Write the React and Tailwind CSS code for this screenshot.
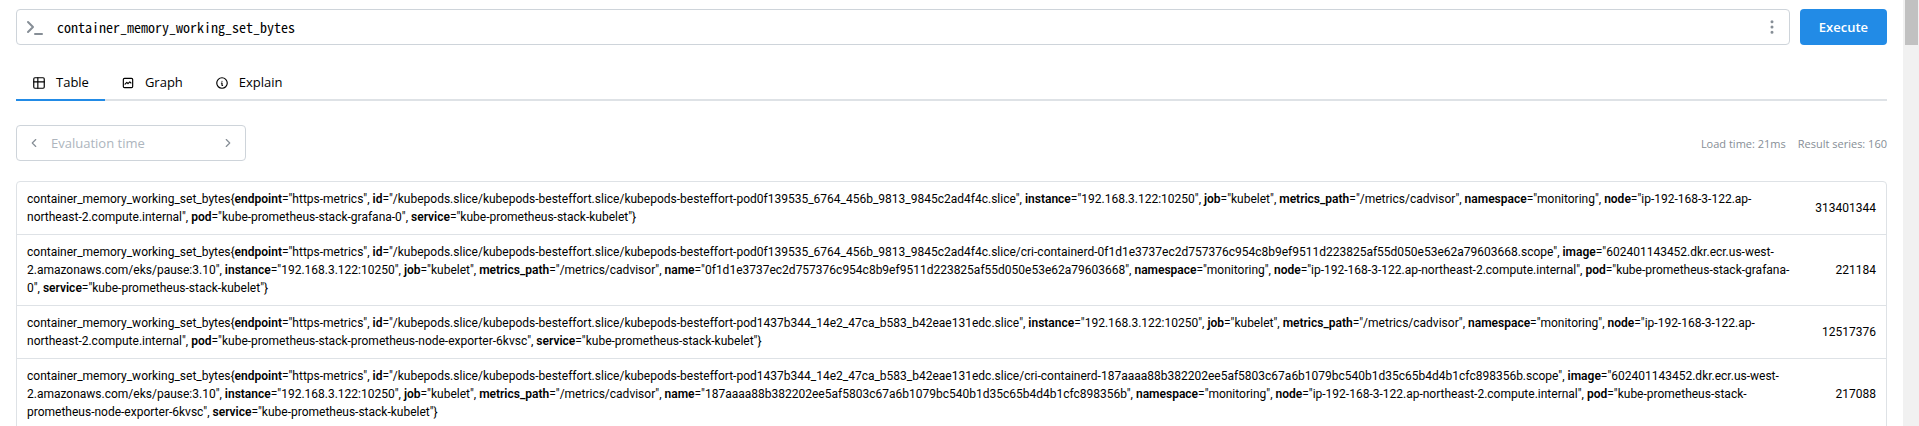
import React, { useState } from 'react';
import { TbTable, TbGraph, TbInfoCircle, TbChevronLeft, TbChevronRight, TbDotsVertical, TbTerminal } from 'react-icons/tb';

const METRIC = 'container_memory_working_set_bytes';

const BASE = '/kubepods.slice/kubepods-besteffort.slice/kubepods-besteffort-pod';
const COMMON = {
  instance: '192.168.3.122:10250',
  job: 'kubelet',
  metrics_path: '/metrics/cadvisor',
};
const NODE = 'ip-192-168-3-122.ap-northeast-2.compute.internal';
const PAUSE_IMAGE = '602401143452.dkr.ecr.us-west-2.amazonaws.com/eks/pause:3.10';

const SERIES = [
  {
    labels: {
      endpoint: 'https-metrics',
      id: `${BASE}0f139535_6764_456b_9813_9845c2ad4f4c.slice`,
      ...COMMON,
      namespace: 'monitoring',
      node: NODE,
      pod: 'kube-prometheus-stack-grafana-0',
      service: 'kube-prometheus-stack-kubelet',
    },
    value: '313401344',
  },
  {
    labels: {
      endpoint: 'https-metrics',
      id: `${BASE}0f139535_6764_456b_9813_9845c2ad4f4c.slice/cri-containerd-0f1d1e3737ec2d757376c954c8b9ef9511d223825af55d050e53e62a79603668.scope`,
      image: PAUSE_IMAGE,
      ...COMMON,
      name: '0f1d1e3737ec2d757376c954c8b9ef9511d223825af55d050e53e62a79603668',
      namespace: 'monitoring',
      node: NODE,
      pod: 'kube-prometheus-stack-grafana-0',
      service: 'kube-prometheus-stack-kubelet',
    },
    value: '221184',
  },
  {
    labels: {
      endpoint: 'https-metrics',
      id: `${BASE}1437b344_14e2_47ca_b583_b42eae131edc.slice`,
      ...COMMON,
      namespace: 'monitoring',
      node: NODE,
      pod: 'kube-prometheus-stack-prometheus-node-exporter-6kvsc',
      service: 'kube-prometheus-stack-kubelet',
    },
    value: '12517376',
  },
  {
    labels: {
      endpoint: 'https-metrics',
      id: `${BASE}1437b344_14e2_47ca_b583_b42eae131edc.slice/cri-containerd-187aaaa88b382202ee5af5803c67a6b1079bc540b1d35c65b4d4b1cfc898356b.scope`,
      image: PAUSE_IMAGE,
      ...COMMON,
      name: '187aaaa88b382202ee5af5803c67a6b1079bc540b1d35c65b4d4b1cfc898356b',
      namespace: 'monitoring',
      node: NODE,
      pod: 'kube-prometheus-stack-prometheus-node-exporter-6kvsc',
      service: 'kube-prometheus-stack-kubelet',
    },
    value: '217088',
  },
];

const TABS = [
  { id: 'table', label: 'Table', Icon: TbTable },
  { id: 'graph', label: 'Graph', Icon: TbGraph },
  { id: 'explain', label: 'Explain', Icon: TbInfoCircle },
];

function SeriesName({ labels }) {
  const entries = Object.entries(labels);
  return (
    <>
      {`${METRIC}{`}
      {entries.map(([key, value], i) => (
        <React.Fragment key={key}>
          <span className="font-semibold">{key}</span>
          {`="${value}"${i < entries.length - 1 ? ', ' : '}'}`}
        </React.Fragment>
      ))}
    </>
  );
}

export default function App() {
  const [query, setQuery] = useState(METRIC);
  const [tab, setTab] = useState('table');
  const [time, setTime] = useState('');

  return (
    <div className="flex h-screen overflow-hidden bg-white font-['Open_Sans',sans-serif] text-[13px] text-black">
      <main className="min-w-0 flex-1 px-4 pt-[9px]">
        {/* Query bar */}
        <div className="flex gap-2.5">
          <div className="flex h-9 min-w-0 flex-1 items-center rounded border border-[#ced4da] pl-1.5 pr-2">
            <TbTerminal className="h-6 w-6 text-[#868e96]" />
            <input
              aria-label="Query expression"
              value={query}
              onChange={(e) => setQuery(e.target.value)}
              className="ml-2.5 min-w-0 flex-1 bg-transparent font-['Noto_Sans_Mono_CJK_KR','Liberation_Mono',monospace] text-sm outline-none"
            />
            <button aria-label="Query options" className="text-[#868e96]">
              <TbDotsVertical className="h-[18px] w-[18px]" />
            </button>
          </div>
          <button className="h-9 w-[87px] rounded bg-[#228be6] pt-0.5 font-semibold text-white">Execute</button>
        </div>

        {/* Tabs */}
        <div role="tablist" className="mt-5 flex border-b-2 border-[#dee2e6]">
          {TABS.map(({ id, label, Icon }) => (
            <button
              key={id}
              role="tab"
              aria-selected={tab === id}
              onClick={() => setTab(id)}
              className={`-mb-0.5 flex h-9 items-center gap-2.5 border-b-2 px-4 pt-0.5 ${tab === id ? 'border-[#228be6]' : 'border-transparent'}`}
            >
              <Icon className="h-3.5 w-3.5" />
              {label}
            </button>
          ))}
        </div>

        {/* Evaluation time and stats */}
        <div className="mt-6 flex items-center justify-between">
          <div className="flex h-9 w-[230px] items-center rounded border border-[#ced4da] px-2.5 text-[#868e96]">
            <button aria-label="Decrease evaluation time">
              <TbChevronLeft className="h-3.5 w-3.5" />
            </button>
            <input
              aria-label="Evaluation time"
              placeholder="Evaluation time"
              value={time}
              onChange={(e) => setTime(e.target.value)}
              className="ml-2.5 min-w-0 flex-1 bg-transparent pt-0.5 text-black outline-none placeholder:text-[#adb5bd]"
            />
            <button aria-label="Increase evaluation time">
              <TbChevronRight className="h-3.5 w-3.5" />
            </button>
          </div>
          <div className="flex gap-3 pt-0.5 text-[11px] text-[#868e96]">
            <span>Load time: 21ms</span>
            <span>Result series: 160</span>
          </div>
        </div>

        {/* Results */}
        <div className="mt-5 rounded border border-[#dee2e6]">
          <table className="w-full font-['Roboto',sans-serif] text-xs leading-[18px]">
            <tbody>
              {SERIES.map(({ labels, value }) => (
                <tr key={labels.id} className="border-b border-[#dee2e6] last:border-b-0">
                  <td className="px-2.5 py-2">
                    <SeriesName labels={labels} />
                  </td>
                  <td className="w-20 px-2.5 py-2 text-right">{value}</td>
                </tr>
              ))}
            </tbody>
          </table>
        </div>
      </main>

      {/* Scroll track */}
      <div className="w-4 bg-[#f1f1f1] pl-0.5 pr-px">
        <div className="h-[45px] bg-[#c1c1c1]" />
      </div>
    </div>
  );
}
